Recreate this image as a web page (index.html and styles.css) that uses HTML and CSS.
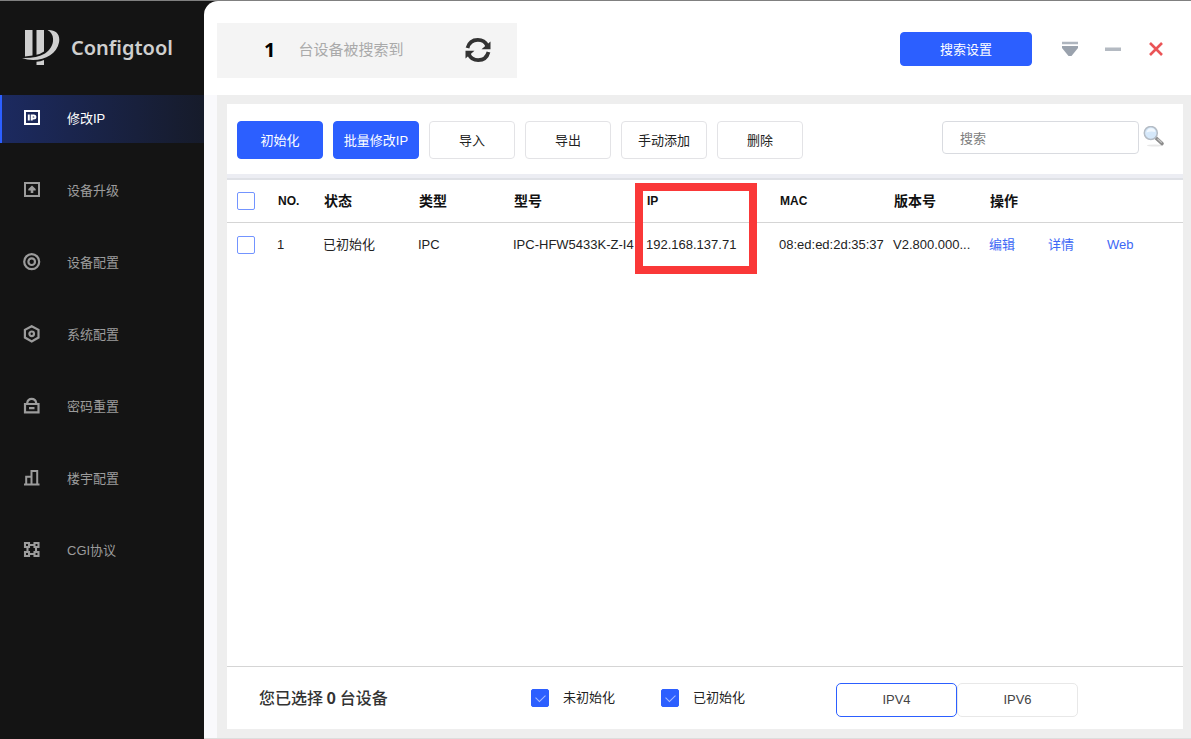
FILE: index.html
```html
<!DOCTYPE html>
<html lang="zh-CN">
<head>
<meta charset="utf-8">
<title>Configtool</title>
<link rel="stylesheet" href="styles.css">
</head>
<body>
<div class="app">
  <aside class="sidebar">
    <div class="brand">
      <svg class="brand-logo" width="38" height="38" viewBox="0 0 38 38" aria-hidden="true">
        <g fill="#cfcfcf">
          <path d="M3 1h7.500v25.500l-7.500 1z"/>
          <path d="M14.500 1H22v21.500q-3.500 2.500-7.500 3.300z"/>
          <path d="M25.500 1C34 .5 38.500 5.500 37 13.500C35 24 24 31 11 31Q5 31 0 29Q14 29.500 23 24.500C29 20.500 31.500 15 31 9.500Q30.500 3.500 25.500 1z"/>
          <path d="M14.500 32.800q4-.4 7.500-1.900V36h-7.500z"/>
        </g>
      </svg>
      <span class="brand-name">Configtool</span>
    </div>
    <nav class="menu">
      <a class="menu-item active" href="#ip">
        <svg class="menu-icon" viewBox="0 0 18 18"><path d="M2 2h14v13H2z" fill="none" stroke="currentColor" stroke-width="2"/><path d="M5.800 5.500v6M8.700 11.500V6.400h2q1.700 0 1.700 1.500t-1.700 1.500H9" fill="none" stroke="currentColor" stroke-width="2"/></svg>
        修改IP</a>
      <a class="menu-item" href="#upgrade">
        <svg class="menu-icon" viewBox="0 0 18 18"><path d="M2 2h14v13H2z" fill="none" stroke="currentColor" stroke-width="2"/><path d="M9 4.500L12.700 8v1.400h-2.400V12H7.700V9.400H5.300V8z" fill="currentColor"/></svg>
        设备升级</a>
      <a class="menu-item" href="#device">
        <svg class="menu-icon" viewBox="0 0 18 18"><g fill="none" stroke="currentColor" stroke-width="2.200"><circle cx="8.700" cy="8.700" r="7.500"/><circle cx="8.700" cy="8.700" r="3.300"/></g></svg>
        设备配置</a>
      <a class="menu-item" href="#system">
        <svg class="menu-icon" viewBox="0 0 18 18"><g fill="none" stroke="currentColor" stroke-width="2.200"><path d="M8.700 1.200l6.800 3.700v7.600l-6.800 3.900-6.800-3.900V4.900z"/><circle cx="8.700" cy="8.800" r="2.300"/></g></svg>
        系统配置</a>
      <a class="menu-item" href="#password">
        <svg class="menu-icon" viewBox="0 0 18 18"><g fill="none" stroke="currentColor" stroke-width="2.200"><path d="M2 7h13.500v8.300H2z"/><path d="M4.300 7V5.500Q5 1.800 8.700 1.800t4.400 3.700V7M6 11.200h5.500"/></g></svg>
        密码重置</a>
      <a class="menu-item" href="#building">
        <svg class="menu-icon" viewBox="0 0 18 18"><path d="M1 15.500h15.500M3.200 15V7.700h5.300V15M8.500 15V1.900h5.700V15" fill="none" stroke="currentColor" stroke-width="2"/></svg>
        楼宇配置</a>
      <a class="menu-item" href="#cgi">
        <svg class="menu-icon" viewBox="0 0 18 18"><g fill="none" stroke="currentColor" stroke-width="2.100"><path d="M2 2h4v4H2zM11.500 2h4v4h-4zM2 11h4v4H2zM11.500 11h4v4h-4z"/><path d="M6 4h5.500M6 13h5.500M4.500 6v5M13 6v5"/></g></svg>
        CGI协议</a>
    </nav>
  </aside>

  <div class="main">
    <header class="topbar">
      <div class="found">
        <strong class="found-count">1</strong>
        <span class="found-text">台设备被搜索到</span>
        <button class="icon-btn refresh" aria-label="刷新">
          <svg width="26" height="26" viewBox="0 0 26 26"><g fill="none" stroke="#333" stroke-width="3.800"><path d="M2.500 11C4 5.500 8 2.900 12.800 2.900C17 2.900 20.500 5 22 8.500"/><path d="M23.500 15C22 20.500 18 23.100 13.200 23.100C9 23.100 5.500 21 4 17.500"/></g><path d="M25.500 4.500v7.800h-9zM.5 21.500v-7.800h9z" fill="#333"/></svg>
        </button>
      </div>
      <div class="window-tools">
        <button class="btn primary search-settings">搜索设置</button>
        <button class="icon-btn" aria-label="菜单"><svg width="16" height="16" viewBox="0 0 16 16"><path d="M0 .8h16v2.400H0z" fill="#aeb5be"/><path d="M0 5h16v2L9.500 15h-3L0 7z" fill="#9aa2ad"/></svg></button>
        <button class="icon-btn" aria-label="最小化"><svg width="16" height="16" viewBox="0 0 16 16"><path d="M0 6.500h16V10H0z" fill="#b4bac2"/></svg></button>
        <button class="icon-btn" aria-label="关闭"><svg width="16" height="16" viewBox="0 0 16 16"><path d="M2 2l12 12M14 2L2 14" stroke="#ea5457" stroke-width="2.600"/></svg></button>
      </div>
    </header>

    <div class="content">
      <section class="panel">
        <div class="toolbar">
          <div class="actions">
            <button class="btn primary">初始化</button>
            <button class="btn primary">批量修改IP</button>
            <button class="btn">导入</button>
            <button class="btn">导出</button>
            <button class="btn">手动添加</button>
            <button class="btn">删除</button>
          </div>
          <form class="search">
            <input class="search-input" type="text" placeholder="搜索" aria-label="搜索">
            <button class="icon-btn" type="button" aria-label="查找">
              <svg width="22" height="22" viewBox="0 0 22 22"><ellipse cx="12" cy="19.500" rx="8" ry="1" fill="#e8e8e8"/><path d="M13 12l6 5.500" stroke="#8b8b8b" stroke-width="3.600" stroke-linecap="round"/><path d="M14.500 12.700l4.300 4" stroke="#c4c4c4" stroke-width="1.200"/><circle cx="7.800" cy="7" r="6.500" fill="#d5e8fa" stroke="#b4bcc5" stroke-width="1.500"/><path d="M3.500 6.500Q4 2.500 8 2.300T12.300 6Q7.500 5 3.500 6.500z" fill="#f1f8fe"/></svg>
            </button>
          </form>
        </div>

        <div class="table-area">
          <table class="devices">
            <colgroup>
              <col class="c-check"><col class="c-no"><col class="c-type"><col class="c-type"><col class="c-ip"><col class="c-ip"><col class="c-mac"><col class="c-version"><col>
            </colgroup>
            <thead>
              <tr>
                <th><input class="check" type="checkbox" aria-label="全选"></th>
                <th>NO.</th><th>状态</th><th>类型</th><th>型号</th><th>IP</th><th>MAC</th><th>版本号</th><th>操作</th>
              </tr>
            </thead>
            <tbody>
              <tr>
                <td><input class="check" type="checkbox" aria-label="选择设备 1"></td>
                <td>1</td><td>已初始化</td><td>IPC</td><td>IPC-HFW5433K-Z-I4</td><td>192.168.137.71</td><td>08:ed:ed:2d:35:37</td><td>V2.800.000...</td>
                <td><div class="links"><a href="#edit">编辑</a><a href="#detail">详情</a><a href="#web">Web</a></div></td>
              </tr>
            </tbody>
          </table>
          <div class="highlight"></div>
        </div>

        <footer class="footer">
          <p class="selected">您已选择 <b>0</b> 台设备</p>
          <div class="filters">
            <label class="filter"><input class="check" type="checkbox" checked>未初始化</label>
            <label class="filter"><input class="check" type="checkbox" checked>已初始化</label>
          </div>
          <div class="ip-version">
            <button class="tab current">IPV4</button><button class="tab">IPV6</button>
          </div>
        </footer>
      </section>
    </div>
  </div>
</div>
</body>
</html>
```
FILE: styles.css
```css
* {
  box-sizing: border-box;
}

body {
  margin: 0;
  font: 13px/20px "Liberation Sans", "Noto Sans CJK SC", sans-serif;
  color: #222;
}

button,
input {
  font: inherit;
  color: inherit;
  margin: 0;
}

a {
  text-decoration: none;
}

.app {
  display: grid;
  grid-template-columns: 204px 1fr;
  min-height: 100vh;
  background: #141414;
  border-top: 1px solid #808080;
}

/* Sidebar */
.brand {
  display: flex;
  align-items: center;
  gap: 11px;
  height: 94px;
  padding-left: 22px;
}

.brand-name {
  font: 600 20px/24px "Noto Sans", sans-serif;
  font-variant-ligatures: none;
  color: #cfcfcf;
}

.menu {
  display: grid;
  gap: 24px;
}

.menu-item {
  display: flex;
  align-items: center;
  gap: 26px;
  height: 48px;
  padding-left: 20px;
  border-left: 3px solid transparent;
  color: #9c9c9c;
}

.menu-item.active {
  border-left: 2px solid #2c5fff;
  padding-left: 21px;
  background: linear-gradient(90deg, #1c2a60, #161b2a);
  color: #fff;
}

.menu-icon {
  width: 18px;
  height: 18px;
  margin-bottom: 2px;
}

/* Main column */
.main {
  display: flex;
  flex-direction: column;
  background: #fff;
  border-top-left-radius: 14px;
  border-bottom: 1px solid #ddd;
  overflow: hidden;
}

.topbar {
  display: flex;
  align-items: center;
  justify-content: space-between;
  height: 94px;
  padding: 0 27px 0 13px;
}

.found {
  display: flex;
  align-items: center;
  width: 300px;
  height: 55px;
  margin-top: 4px;
  padding: 0 26px 0 47px;
  background: #f4f4f4;
}

.found-count {
  font: bold 20px/24px "Noto Sans", sans-serif;
  color: #000;
}

.found-text {
  margin-left: 23px;
  font-size: 15px;
  color: #aaa;
}

.icon-btn {
  display: flex;
  padding: 0;
  border: 0;
  background: none;
}

.refresh {
  margin-left: auto;
}

.window-tools {
  display: flex;
  align-items: center;
  gap: 27px;
  padding-top: 2px;
}

.btn {
  height: 38px;
  width: 86px;
  padding: 2px 0 0;
  border: 1px solid #e3e3e6;
  border-radius: 4px;
  background: #fff;
}

.btn.primary {
  border-color: #2c5fff;
  background: #2c5fff;
  color: #fff;
}

.btn.search-settings {
  width: 132px;
  height: 34px;
  margin-right: 3px;
}

.content {
  flex: 1;
  display: flex;
  padding: 9px 8px 9px 10px;
  border-left: 13px solid #f9f9fc;
  background: #eee;
}

.panel {
  flex: 1;
  display: flex;
  flex-direction: column;
  min-width: 0;
  background: #fff;
}

.toolbar {
  display: flex;
  align-items: center;
  justify-content: space-between;
  height: 76px;
  padding: 0 18px 2px 10px;
  border-bottom: 2px solid #dfe1e6;
  background: linear-gradient(#fff 70px, #ecedf3 70px);
}

.actions {
  display: flex;
  gap: 10px;
}

.search {
  display: flex;
  align-items: center;
  gap: 4px;
  margin-bottom: 6px;
}

.search-input {
  width: 197px;
  height: 33px;
  padding: 2px 17px 0;
  border: 1px solid #d9dbe0;
  border-radius: 4px;
}

.search-input::placeholder {
  color: #7d7d7d;
}

/* Device table */
.table-area {
  flex: 1;
  position: relative;
}

.devices {
  width: 100%;
  table-layout: fixed;
  border-collapse: collapse;
}

.c-check { width: 48px; }
.c-no { width: 46px; }
.c-type { width: 95px; }
.c-ip { width: 133px; }
.c-mac { width: 114px; }
.c-version { width: 96px; }

.devices th,
.devices td {
  padding: 0 0 0 2px;
  text-align: left;
  white-space: nowrap;
}

.devices th {
  height: 42px;
  padding-left: 3px;
  border-bottom: 1px solid #d5d5d5;
  font-size: 14px;
  color: #111;
}

.devices td {
  height: 46px;
}

.devices th:first-child,
.devices td:first-child {
  padding-left: 10px;
}

.devices th:nth-child(2),
.devices th:nth-child(6),
.devices th:nth-child(7) {
  font-size: 12px;
}

.check {
  appearance: none;
  display: block;
  width: 18px;
  height: 18px;
  border: 1px solid #7394ff;
  border-radius: 2px;
  background: #fff;
}

.check:checked {
  border-color: #2c5fff;
  background: #2c5fff;
}

.check:checked::after {
  content: "";
  display: block;
  width: 8px;
  height: 5px;
  margin: 4px 0 0 4px;
  border: solid #a9beff;
  border-width: 0 0 1px 1px;
  transform: rotate(-45deg);
}

.links {
  display: flex;
  gap: 33px;
}

.links a {
  color: #3d68f5;
}

.highlight {
  position: absolute;
  left: 408px;
  top: 3px;
  width: 122px;
  height: 91px;
  border: 8px solid #fa3838;
}

/* Footer */
.footer {
  display: grid;
  grid-template-columns: 304px 305px 1fr;
  align-items: center;
  height: 63px;
  border-top: 1px solid #d5d5d5;
}

.selected {
  margin: 0;
  padding: 0 0 2px 32px;
  font: 500 16px/20px "Noto Sans CJK SC", sans-serif;
  color: #333;
}

.filters {
  display: flex;
  gap: 46px;
}

.filter {
  display: flex;
  align-items: center;
  gap: 14px;
}

.ip-version {
  display: flex;
  padding-top: 4px;
}

.tab {
  width: 121px;
  height: 34px;
  padding: 0;
  border: 1px solid #e8e8e8;
  border-radius: 5px;
  background: #fff;
  color: #444;
}

.tab.current {
  border-color: #2c5fff;
}
```
